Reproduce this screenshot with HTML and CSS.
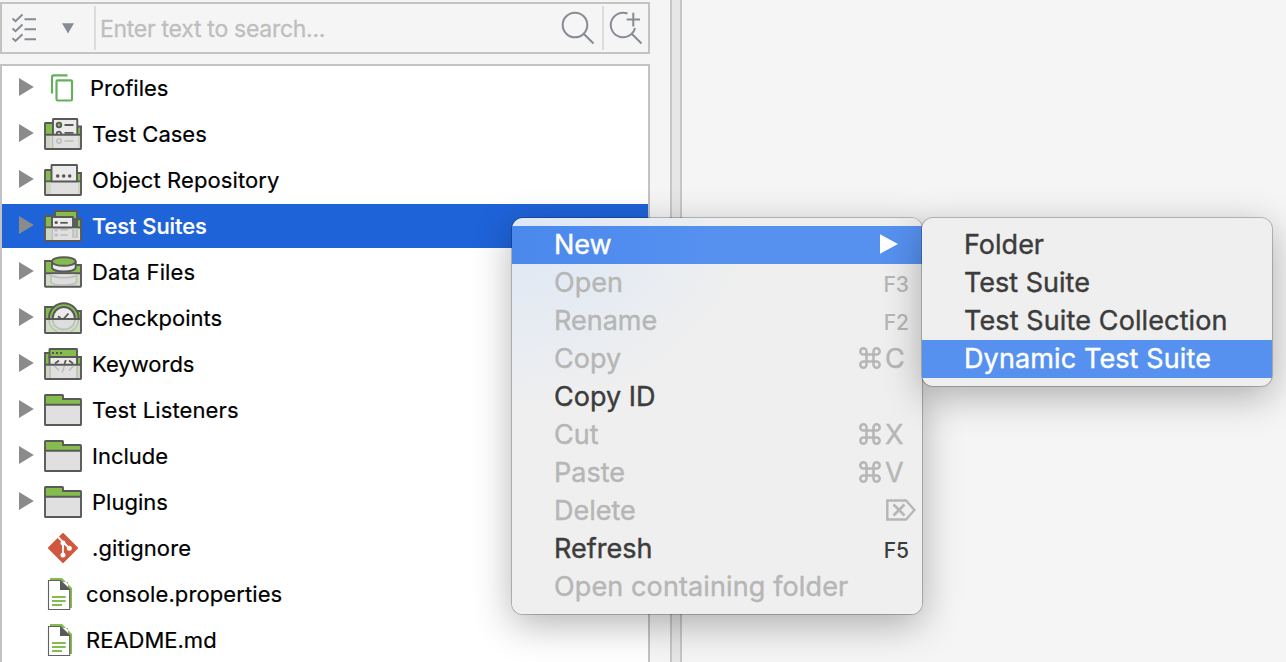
FILE: index.html
```html
<!DOCTYPE html>
<html lang="en">
<head>
<meta charset="utf-8">
<title>Tests Explorer</title>
<link rel="stylesheet" href="styles.css">
</head>
<body>
<svg class="defs" aria-hidden="true">
  <symbol id="folder" viewBox="0 0 44 44">
    <path class="green ink" d="M5 17V7.600Q5 7 5.600 7H22.500Q23 7 23 7.600V11H40.400Q41 11 41 11.600V17"/>
    <path class="pale ink" d="M5 16.800H41V36.400Q41 37 40.400 37H5.600Q5 37 5 36.400Z"/>
  </symbol>
  <symbol id="doc" viewBox="0 0 44 44">
    <path fill="#84bd4e" d="M10 6H22L32 16V36H28V10H10Z"/>
    <path fill="#fff" stroke="#606163" stroke-width="1.100" d="M8.500 8.500H20.500L29.700 17.500V37.500H8.500Z"/>
    <path fill="#58595b" d="M20 8.500L30 18H20Z"/>
    <path stroke="#84bd4e" stroke-width="1.900" d="M12 25H25.700M12 29H25.700M12 33H22"/>
  </symbol>
  <symbol id="cmd" viewBox="0 0 24 24">
    <path fill="none" stroke="currentColor" stroke-width="2.500" d="M8.500 8.500V5.400A3.100 3.100 0 1 0 5.400 8.500H18.600A3.100 3.100 0 1 0 15.500 5.400V18.600A3.100 3.100 0 1 0 18.600 15.500H5.400A3.100 3.100 0 1 0 8.500 18.600Z"/>
  </symbol>
  <symbol id="arrow" viewBox="0 0 16 20"><path fill="#8b8b8b" d="M1 1L15.800 10L1 19Z"/></symbol>
</svg>
<main class="window">
  <section class="explorer">
    <div class="search">
      <div class="filter">
        <svg class="checks" viewBox="0 0 26 30"><path fill="none" stroke="#878b94" stroke-width="2" d="M2.500 5.500L5.500 8.200L12.500 1.500M2.500 15.500L5.500 18.200L12.500 11.500M2.500 25.300L5.500 28L12.500 21.300M14.500 6.300H26M14.500 16.300H26M14.500 26.300H26"/></svg>
        <svg class="drop" viewBox="0 0 12 11"><path fill="#878b94" d="M0 0.300H12L6 10.500Z"/></svg>
      </div>
      <div class="query">Enter text to search...</div>
      <div class="find"><svg viewBox="0 0 34 34"><g fill="none" stroke="#878b94" stroke-width="2"><circle cx="14" cy="14" r="12.300"/><path d="M22.700 22.700L32.500 32.500"/></g></svg></div>
      <div class="find-more"><svg viewBox="0 0 34 34"><g fill="none" stroke="#878b94" stroke-width="2"><path d="M18.500 2.500A12.300 12.300 0 1 0 26 17M22.700 22.700L32.500 32.500M17.700 8.500H31M24.300 1.800V15.500"/></g></svg></div>
    </div>
    <div class="tree">
      <div class="row"><svg class="arrow"><use href="#arrow"/></svg>
        <svg class="icon" viewBox="0 0 44 44"><g fill="none" stroke="#64ae5c" stroke-width="2.200"><path d="M12 27.500V11Q12 9.400 13.600 9.400H27.500"/><rect x="16.500" y="14.300" width="15.500" height="20.200" rx="1.300"/></g></svg>
        <span class="label profiles">Profiles</span></div>
      <div class="row"><svg class="arrow"><use href="#arrow"/></svg>
        <svg class="icon" viewBox="0 0 44 44"><path class="green ink" d="M5 23V11.500Q5 11 5.500 11H13V23M37 23V14.500H41V23"/><path class="page ink" d="M13 23V7.500Q13 7 13.500 7H36.800Q37.300 7 37.300 7.500V23"/><g class="thin"><circle class="green" cx="19" cy="13" r="2.300"/><path d="M24.500 13H33.500M24.500 20.800H33.500M16.700 22A2.300 2.300 0 0 1 21.300 22"/></g><path class="pale ink" d="M5 22.800H41V36.500Q41 37 40.500 37H5.500Q5 37 5 36.500Z"/><path fill="#cbd8bf" d="M6 24H10.500V36H6ZM38 24H40V36H38Z"/><g class="ghost"><path d="M12.500 24V36M24.500 29H33.500"/><circle cx="19" cy="29" r="2.200"/></g></svg>
        <span class="label">Test Cases</span></div>
      <div class="row"><svg class="arrow"><use href="#arrow"/></svg>
        <svg class="icon" viewBox="0 0 44 44"><path class="green ink" d="M5 24V12.500Q5 12 5.500 12H12V24M36 24V15H41V24"/><path class="page ink" d="M11.500 23.500V7.500Q11.500 7 12 7H36.500Q37 7 37 7.500V23.500"/><g fill="#555"><circle cx="17.700" cy="18" r="1.800"/><circle cx="23.700" cy="18" r="1.800"/><circle cx="29.700" cy="18" r="1.800"/></g><path class="pale ink" d="M5 23.500H41V36.500Q41 37 40.500 37H5.500Q5 37 5 36.500Z"/><path fill="#cbd8bf" d="M6 24.500H11V36H6ZM38 24.500H40V36H38Z"/></svg>
        <span class="label wide">Object Repository</span></div>
      <div class="row selected"><svg class="arrow"><use href="#arrow"/></svg>
        <svg class="icon" viewBox="0 0 44 44"><path class="green ink" d="M5 24V12H12V24M35 24V15.300H41V24M15 13V7.500Q15 7 15.500 7H36.500Q37 7 37 7.500V24H33Z"/><path class="page ink" d="M12 24V13.500Q12 13 12.500 13H32.500Q33 13 33 13.500V24"/><circle cx="16.200" cy="18.500" r="1.600" fill="#555"/><path class="thin" d="M20.300 18.800H27.700"/><path class="pale ink" d="M5 23.500H41V36.500Q41 37 40.500 37H5.500Q5 37 5 36.500Z"/><path fill="#cbd8bf" d="M6 24.500H11.500V36H6ZM34 24.500H37.500V32H34Z"/><g class="ghost"><path d="M12.300 24V36M33 24V33H37V24M20.300 25.700H27.700M20.300 31H27.700"/><circle cx="16.200" cy="26" r="1"/><circle cx="16.200" cy="31" r="1"/></g></svg>
        <span class="label">Test Suites</span></div>
      <div class="row"><svg class="arrow"><use href="#arrow"/></svg>
        <svg class="icon" viewBox="0 0 44 44"><path class="green ink" d="M5 23V11H14V15H41V23"/><path class="page ink" d="M12 11.500V18C14 22.500 33.500 22.500 35.700 18V11.500"/><ellipse class="green ink" cx="23.800" cy="11.500" rx="11.900" ry="4.300"/><path fill="#cfddc2" class="ink" d="M5 23.300H41V36.300Q41 36.800 40.500 36.800H5.500Q5 36.800 5 36.300Z"/><path fill="#dedede" d="M11.500 24.300H36V33Q24 37 11.500 33Z"/><path class="ghost" d="M11 24V32C13 36 34 36 36.500 32V24M12 25.500C16 28.500 32 28.500 36 25.500"/></svg>
        <span class="label wide">Data Files</span></div>
      <div class="row"><svg class="arrow"><use href="#arrow"/></svg>
        <svg class="icon" viewBox="0 0 44 44"><path class="green ink" d="M5 23V11H14V15H41V23"/><circle class="green ink" cx="23.800" cy="22" r="14.800"/><circle class="page ink" cx="23.800" cy="22" r="11"/><path class="thin" d="M18 20.300L22.500 24L28.500 17.500"/><path fill="#cfddc2" class="ink" d="M5 23H41V36.500Q41 37 40.500 37H5.500Q5 37 5 36.500Z"/><path fill="#dedede" d="M13 24H35Q33 33 24 33Q15 33 13 24Z"/><path class="ghost" d="M12.800 24C14 36.500 33.600 36.500 34.800 24M9 24C9.500 29 12.500 34 17 35.500M38.600 24C38 29 35 34 30.600 35.500"/></svg>
        <span class="label">Checkpoints</span></div>
      <div class="row"><svg class="arrow"><use href="#arrow"/></svg>
        <svg class="icon" viewBox="0 0 44 44"><path class="green ink" d="M5 23V11H10V23M37 23V15H41V23"/><path class="page ink" d="M9.500 23V14.500H37V23"/><path class="green ink" d="M9.500 15V7.500Q9.500 7 10 7H36.500Q37 7 37 7.500V15Z"/><path fill="#555" d="M12 10H14V12H12ZM16 10H18V12H16ZM20 10H22V12H20Z"/><path class="thin" d="M19 18.500L15 21.500M29 18.500L33 21.500M25.800 18L24.500 22"/><path class="pale ink" d="M5 22.800H41V36.500Q41 37 40.500 37H5.500Q5 37 5 36.500Z"/><path fill="#cbd8bf" d="M6 24H9V36H6ZM37.500 24H40V36H37.500Z"/><path class="ghost" d="M14.500 24L19 28.500M33.500 24L29 28.500M24.300 24L22.300 30.500M10 24V36M37 24V36"/></svg>
        <span class="label">Keywords</span></div>
      <div class="row"><svg class="arrow"><use href="#arrow"/></svg><svg class="icon"><use href="#folder"/></svg><span class="label wide">Test Listeners</span></div>
      <div class="row"><svg class="arrow"><use href="#arrow"/></svg><svg class="icon"><use href="#folder"/></svg><span class="label">Include</span></div>
      <div class="row"><svg class="arrow"><use href="#arrow"/></svg><svg class="icon"><use href="#folder"/></svg><span class="label">Plugins</span></div>
      <div class="row leaf">
        <svg class="icon" viewBox="0 0 44 44"><path fill="#d0583f" stroke="#d0583f" stroke-width="2" stroke-linejoin="round" d="M23 8L37 22L23 36L9 22Z"/><g fill="#fff" stroke="#fff" stroke-width="1.800"><path d="M17.500 10.500L23 16V29M23 16L29 22" fill="none"/><circle cx="23" cy="17" r="1.600"/><circle cx="29.300" cy="22.300" r="1.600"/><circle cx="23" cy="29" r="1.600"/></g></svg>
        <span class="label wide">.gitignore</span></div>
      <div class="row leaf"><svg class="icon"><use href="#doc"/></svg><span class="label file wide">console.properties</span></div>
      <div class="row leaf"><svg class="icon"><use href="#doc"/></svg><span class="label file">README.md</span></div>
    </div>
  </section>
  <div class="sash"></div>
</main>
<div class="menu context">
  <div class="item active"><span>New</span><svg class="more" viewBox="0 0 18 20"><path fill="#fff" d="M0 0.300L18 10L0 19.700Z"/></svg></div>
  <div class="item off"><span>Open</span><span class="fkey">F3</span></div>
  <div class="item off"><span>Rename</span><span class="fkey">F2</span></div>
  <div class="item off"><span>Copy</span><span class="key"><svg><use href="#cmd"/></svg>C</span></div>
  <div class="item"><span>Copy ID</span></div>
  <div class="item off"><span>Cut</span><span class="key"><svg><use href="#cmd"/></svg>X</span></div>
  <div class="item off"><span>Paste</span><span class="key"><svg><use href="#cmd"/></svg>V</span></div>
  <div class="item off"><span>Delete</span><svg class="del" viewBox="0 0 30 22"><path fill="none" stroke="currentColor" stroke-width="2.400" d="M1.300 1.500H20L28.500 11L20 20.500H1.300Z"/><path stroke="currentColor" stroke-width="2.700" d="M7.500 5.500L18.500 16.500M18.500 5.500L7.500 16.500"/></svg></div>
  <div class="item"><span>Refresh</span><span class="fkey">F5</span></div>
  <div class="item off"><span class="long">Open containing folder</span></div>
</div>
<div class="menu submenu">
  <div class="item"><span>Folder</span></div>
  <div class="item"><span>Test Suite</span></div>
  <div class="item"><span class="long">Test Suite Collection</span></div>
  <div class="item active"><span class="long">Dynamic Test Suite</span></div>
</div>
</body>
</html>
```
FILE: styles.css
```css
* { box-sizing: border-box; }
body {
  margin: 0;
  width: 1286px;
  height: 662px;
  overflow: hidden;
  position: relative;
  background: #f5f5f5;
  color: #000;
  font-family: Inter, "Liberation Sans", sans-serif;
}
svg { display: block; flex: none; }
.defs { position: absolute; width: 0; height: 0; }
.window { display: flex; height: 662px; }
.explorer { width: 650px; padding-top: 2px; display: flex; flex-direction: column; gap: 10px; }
.search { display: flex; align-items: center; height: 52px; flex: none; border: 2px solid #c3c3c3; }
.filter { display: flex; align-items: center; width: 94px; height: 44px; padding-left: 8px; border-right: 2px solid #dcdcdc; }
.checks { width: 26px; height: 30px; }
.drop { width: 12px; height: 11px; margin-left: 26px; }
.query { flex: 1; padding: 1px 0 0 4px; font-size: 23px; line-height: 44px; color: #bebebe; letter-spacing: -.28px; -webkit-text-stroke: .3px; }
.find { width: 44px; height: 44px; padding: 5px 0 0 1px; border-right: 2px solid #dcdcdc; }
.find-more { width: 44px; height: 44px; padding: 5px 0 0 5px; }
.find svg, .find-more svg { width: 34px; height: 34px; }
.tree { display: flex; flex-direction: column; gap: 2px; flex: none; height: 610px; overflow: hidden; border: 2px solid #c3c3c3; background: #fff; }
.row { display: flex; align-items: center; height: 44px; flex: none; padding-left: 16px; }
.arrow { width: 16px; height: 20px; margin-bottom: 2px; }
.icon { width: 44px; height: 44px; margin-left: 6px; }
.leaf { padding-left: 32px; }
.label { padding-left: 8px; font-size: 22px; line-height: 44px; white-space: nowrap; -webkit-text-stroke: .2px; }
.wide { letter-spacing: .1px; }
.profiles { padding-left: 6px; }
.file { padding-left: 2px; }
.selected { background: #1f63d9; color: #fff; }
.selected .label { font-weight: 500; letter-spacing: -.1px; }
.green { fill: #84bd4e; }
.pale { fill: #e0e0e0; }
.page { fill: #ebebeb; }
.ink { stroke: #59595a; stroke-width: 1.9; }
.thin { stroke: #59595a; stroke-width: 1.8; fill: none; }
.thin .green { fill: #84bd4e; }
.ghost { stroke: #bdbebb; stroke-width: 1.6; fill: none; }
.sash { width: 12px; margin-left: 20px; border: solid #c6c6c6; border-width: 0 2px; background: #e6e6e6; }
.menu {
  position: absolute;
  top: 218px;
  padding: 8px 0;
  border-radius: 11px;
  background: #efefef;
  box-shadow: 0 0 0 1px rgba(0, 0, 0, .22), 0 10px 38px rgba(0, 0, 0, .3);
  color: #3c3c3c;
  font-size: 27px;
  -webkit-text-stroke: .4px;
}
.context { left: 512px; width: 410px; background: radial-gradient(ellipse 240px 190px at 0 0, #dce7f6, #efefef); }
.submenu { left: 922px; width: 350px; }
.item { display: flex; align-items: center; justify-content: space-between; height: 38px; padding: 0 13px 2px 42px; white-space: nowrap; }
.long { letter-spacing: .12px; }
.active { background: #5691f0; color: #fff; }
.context .active { background: linear-gradient(90deg, #4a88ec, #5691f0 50%); }
.off { color: #b6b6b6; }
.more { width: 18px; height: 20px; margin-right: 11px; }
.fkey { font-size: 21px; font-weight: 500; padding-top: 5px; -webkit-text-stroke: 0; }
.key { display: flex; align-items: center; gap: 3px; width: 51px; }
.key svg { width: 24px; height: 24px; }
.del { width: 30px; height: 22px; margin-right: -7px; }
```
